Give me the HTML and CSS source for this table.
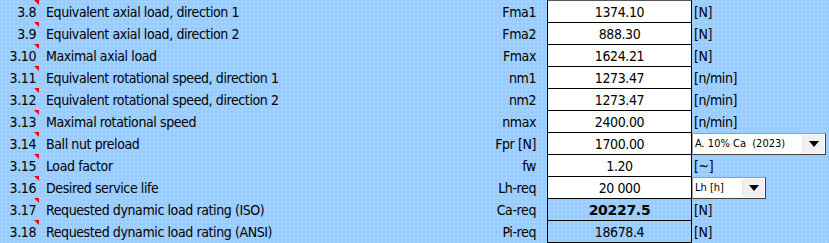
FILE: index.html
```html
<!DOCTYPE html>
<html>
<head>
<meta charset="utf-8">
<link rel="stylesheet" href="styles.css">
</head>
<body>
<div class="sheet">
  <div class="num"><span class="mark"></span>3.8</div><div class="label">Equivalent axial load, direction 1</div><div class="sym">Fma1</div><div class="val first">1374.10</div><div class="unit">[N]</div>
  <div class="num"><span class="mark"></span>3.9</div><div class="label">Equivalent axial load, direction 2</div><div class="sym">Fma2</div><div class="val">888.30</div><div class="unit">[N]</div>
  <div class="num"><span class="mark"></span>3.10</div><div class="label">Maximal axial load</div><div class="sym">Fmax</div><div class="val">1624.21</div><div class="unit">[N]</div>
  <div class="num"><span class="mark"></span>3.11</div><div class="label">Equivalent rotational speed, direction 1</div><div class="sym">nm1</div><div class="val">1273.47</div><div class="unit">[n/min]</div>
  <div class="num"><span class="mark"></span>3.12</div><div class="label">Equivalent rotational speed, direction 2</div><div class="sym">nm2</div><div class="val">1273.47</div><div class="unit">[n/min]</div>
  <div class="num"><span class="mark"></span>3.13</div><div class="label">Maximal rotational speed</div><div class="sym">nmax</div><div class="val">2400.00</div><div class="unit">[n/min]</div>
  <div class="num"><span class="mark"></span>3.14</div><div class="label">Ball nut preload</div><div class="sym">Fpr [N]</div><div class="val">1700.00</div><div class="unit"><div class="combo wide"><span class="combo-text">A. 10% Ca&nbsp; (2023)</span><span class="combo-btn"><span class="tri"></span></span></div></div>
  <div class="num"><span class="mark"></span>3.15</div><div class="label">Load factor</div><div class="sym">fw</div><div class="val">1.20</div><div class="unit">[~]</div>
  <div class="num"><span class="mark"></span>3.16</div><div class="label">Desired service life</div><div class="sym">Lh-req</div><div class="val">20 000</div><div class="unit"><div class="combo short"><span class="combo-text">Lh [h]</span><span class="combo-btn"><span class="tri"></span></span></div></div>
  <div class="num"><span class="mark"></span>3.17</div><div class="label">Requested dynamic load rating (ISO)</div><div class="sym">Ca-req</div><div class="val result bold">20227.5</div><div class="unit">[N]</div>
  <div class="num"><span class="mark"></span>3.18</div><div class="label">Requested dynamic load rating (ANSI)</div><div class="sym">Pi-req</div><div class="val result last">18678.4</div><div class="unit">[N]</div>
</div>
</body>
</html>
```
FILE: styles.css
```css
html, body {
  margin: 0;
  padding: 0;
}
body {
  width: 829px;
  height: 243px;
  overflow: hidden;
  background-color: #99ccff;
  background-image: radial-gradient(circle, rgba(255,255,255,0.35) 0.6px, transparent 0.8px);
  background-size: 4px 4px;
  font-family: "DejaVu Sans Condensed", "DejaVu Sans", sans-serif;
  font-size: 14px;
  letter-spacing: -0.4px;
  color: #000;
}
.sheet {
  display: grid;
  grid-template-columns: 40px 400px 107px 145px 137px;
  grid-auto-rows: 22px;
}
.sheet > div {
  display: flex;
  align-items: flex-end;
  padding-bottom: 1px;
  line-height: 17px;
  white-space: nowrap;
  box-sizing: border-box;
}
.num {
  position: relative;
  justify-content: flex-end;
  padding-right: 4px;
}
.mark {
  position: absolute;
  top: 0;
  right: 1px;
  width: 0;
  height: 0;
  border-top: 5px solid #ff0000;
  border-left: 5px solid transparent;
}
.label {
  padding-left: 6px;
}
.sym {
  justify-content: flex-end;
  padding-right: 11px;
}
.val {
  justify-content: center;
  background: #fff;
  border-left: 1px solid #000;
  border-right: 1px solid #000;
  border-top: 1px solid #000;
}
.val.first {
  border-top-color: #555;
}
.val.result {
  background: transparent;
}
.val.last {
  border-bottom: 1px solid #000;
  height: 23px;
}
.val.bold {
  font-family: "DejaVu Sans", sans-serif;
  font-weight: bold;
  font-size: 14px;
  letter-spacing: -0.3px;
}
.unit {
  padding-left: 2px;
}
.combo {
  align-self: flex-start;
  margin-top: 1px;
  margin-left: -2px;
  height: 22px;
  box-sizing: border-box;
  background: #fff;
  border-top: 1px solid #a0a0a0;
  border-left: 1px solid #a0a0a0;
  border-right: 1px solid #404040;
  border-bottom: 1px solid #404040;
  display: flex;
  align-items: stretch;
  font-family: "DejaVu Sans Condensed", "DejaVu Sans", sans-serif;
  font-size: 11px;
  letter-spacing: 0;
}
.combo.wide { width: 134px; }
.combo.short { width: 74px; }
.combo-text {
  flex: 1;
  padding-left: 2px;
  padding-top: 3px;
  line-height: 13px;
}
.combo-btn {
  width: 21px;
  margin: 1px;
  background: #f0f0f0;
  border-left: 1px solid #e4e4e4;
  display: flex;
  align-items: center;
  justify-content: center;
}
.tri {
  width: 0;
  height: 0;
  border-left: 5px solid transparent;
  border-right: 5px solid transparent;
  border-top: 6px solid #000;
}
```
